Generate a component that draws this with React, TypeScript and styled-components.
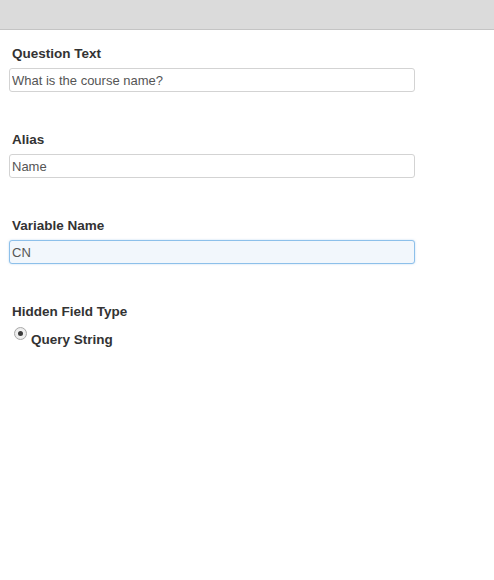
import React from "react";
import styled, { createGlobalStyle } from "styled-components";

const GlobalStyle = createGlobalStyle`
  html, body {
    margin: 0;
    padding: 0;
    background: #fff;
    font-family: "Liberation Sans", Arial, sans-serif;
  }
`;

const Page = styled.div`
  width: 494px;
  min-height: 580px;
  background: #fff;
`;

const TopBar = styled.div`
  height: 29px;
  background: #dbdbdb;
  border-bottom: 1px solid #c4c4c4;
`;

const Form = styled.div`
  padding: 16px 0 0 9px;
`;

const Field = styled.div`
  margin-bottom: 40px;
`;

const Label = styled.div`
  padding-left: 3px;
  font-size: 13.5px;
  line-height: 16px;
  font-weight: bold;
  color: #333;
  margin-bottom: 6px;
`;

const TextInput = styled.input<{ $focused?: boolean }>`
  display: block;
  box-sizing: border-box;
  width: 406px;
  height: 24px;
  margin: 0;
  padding: 0 2px;
  font-family: "Liberation Sans", Arial, sans-serif;
  font-size: 13px;
  color: #555;
  border: 1px solid ${(p) => (p.$focused ? "#8dc0ea" : "#d3d3d3")};
  border-radius: 3px;
  background: ${(p) => (p.$focused ? "#f2f7fc" : "#fff")};
  box-shadow: ${(p) => (p.$focused ? "0 0 2px rgba(120,175,230,0.5)" : "none")};
  outline: none;
`;

const RadioRow = styled.label`
  display: flex;
  align-items: flex-start;
  gap: 4px;
  margin-top: 7px;
  padding-left: 5px;
`;

const Radio = styled.span`
  box-sizing: border-box;
  width: 13px;
  height: 13px;
  border-radius: 50%;
  border: 1px solid #a9a9a9;
  background: radial-gradient(circle, #f8f8f8 0%, #e6e6e6 100%);
  display: flex;
  align-items: center;
  justify-content: center;

  &::after {
    content: "";
    width: 5px;
    height: 5px;
    border-radius: 50%;
    background: #3a3a3a;
  }
`;

const RadioText = styled.span`
  padding-top: 5px;
  font-size: 13.5px;
  line-height: 16px;
  font-weight: bold;
  color: #333;
`;

export default function App() {
  return (
    <Page>
      <GlobalStyle />
      <TopBar />
      <Form>
        <Field>
          <Label>Question Text</Label>
          <TextInput defaultValue="What is the course name?" />
        </Field>
        <Field>
          <Label>Alias</Label>
          <TextInput defaultValue="Name" />
        </Field>
        <Field>
          <Label>Variable Name</Label>
          <TextInput $focused defaultValue="CN" />
        </Field>
        <Field>
          <Label>Hidden Field Type</Label>
          <RadioRow>
            <Radio />
            <RadioText>Query String</RadioText>
          </RadioRow>
        </Field>
      </Form>
    </Page>
  );
}
